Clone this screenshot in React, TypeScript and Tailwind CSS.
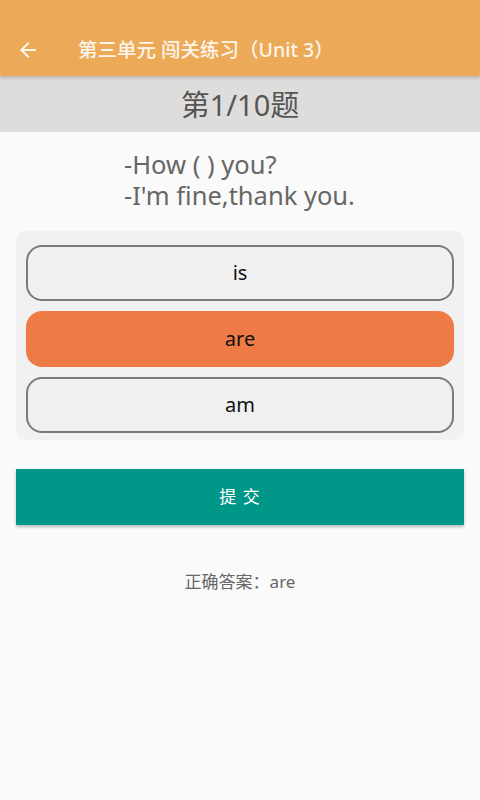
import React from "react";

const font = { fontFamily: '"Noto Sans", "Noto Sans CJK SC", sans-serif' };

export default function App() {
  const options = ["is", "are", "am"];
  const selected = 1;
  return (
    <div className="w-[480px] h-[800px] bg-[#fafafa] flex flex-col" style={font}>
      <header className="bg-[#ecaa58] pt-[24px] shadow-[0_2px_3px_rgba(0,0,0,0.18)] relative z-10">
        <div className="h-[52px] flex items-center">
          <div className="w-[78px] pl-[16px] flex items-center">
            <svg width="24" height="24" viewBox="0 0 24 24" fill="#fdf6ec">
              <path d="M20 11H7.83l5.59-5.59L12 4l-8 8 8 8 1.41-1.41L7.83 13H20v-2z" />
            </svg>
          </div>
          <h1 className="text-[19.5px] font-medium text-[#fdf5ea] leading-none">第三单元 闯关练习（Unit 3）</h1>
        </div>
      </header>
      <div className="h-[56px] bg-[#dedddc] flex items-center justify-center">
        <span className="text-[29px] text-[#555555] leading-none">第1/10题</span>
      </div>
      <div className="pt-[17px] pl-[124px] text-[25.5px] leading-[31px] text-[#666666]">
        <p>-How ( ) you?</p>
        <p>-I'm fine,thank you.</p>
      </div>
      <div className="mx-[16px] mt-[20px] bg-[#f1f1f1] rounded-[10px] px-[10px] pt-[14px] pb-[7px] flex flex-col gap-[10px]">
        {options.map((o, i) =>
          i === selected ? (
            <div key={o} className="h-[56px] rounded-[16px] bg-[#ee7b45] flex items-center justify-center text-[20px] text-[#111111]">
              {o}
            </div>
          ) : (
            <div key={o} className="h-[56px] rounded-[16px] bg-[#f0f0f0] border-2 border-[#7a7a7a] flex items-center justify-center text-[20px] text-[#111111]">
              {o}
            </div>
          )
        )}
      </div>
      <button className="mx-[16px] mt-[29px] h-[56px] bg-[#009688] text-white text-[17px] tracking-[1px] flex items-center justify-center shadow-[0_2px_3px_rgba(0,0,0,0.25)]">
        提 交
      </button>
      <p className="mt-[44px] text-center text-[17px] text-[#666666]">正确答案：are</p>
    </div>
  );
}
